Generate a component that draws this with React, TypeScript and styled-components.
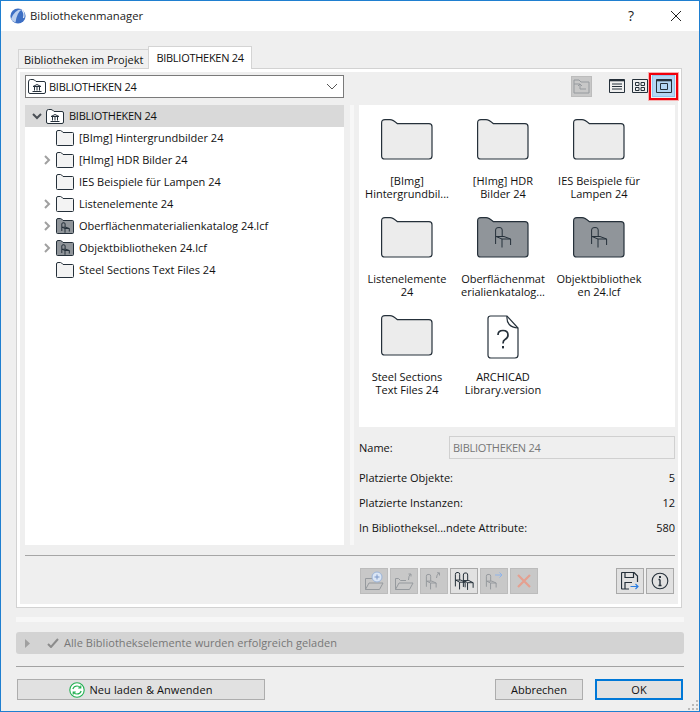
import styled, { createGlobalStyle } from "styled-components"
import { ReactNode } from "react"

const GlobalStyle = createGlobalStyle`
	html, body {
		margin: 0;
		padding: 0;
		background: #efefef;
	}
	* {
		box-sizing: border-box;
	}
`

const INK = "#25303a"
const DIM = "#969a9e"

const FOLDER_PATH =
	"M0.6 4 Q0.6 0.6 4 0.6 H9 Q12 0.6 16.5 4.7 H48 Q51 4.7 51 7.7 V37 Q51 40 48 40 H3.6 Q0.6 40 0.6 37 Z"

const Chair = ({
	x = 0,
	y = 0,
	color = INK,
	s = 1,
	sy,
}: {
	x?: number
	y?: number
	color?: string
	s?: number
	sy?: number
}) => (
	<path
		transform={`translate(${x} ${y}) scale(${s} ${sy ?? s})`}
		d="M0.6 17 V3 Q0.6 0.6 3 0.6 H5 Q7.2 0.6 7.2 3 V9.5 M1 9.5 H9 L15.6 12 H7 L1 9.5 M7 12 V20.5 M15.6 12 V18"
		fill="none"
		stroke={color}
		strokeWidth="1"
		vectorEffect="non-scaling-stroke"
	/>
)

const BigFolder = ({ dark }: { dark?: boolean }) => (
	<svg width="52" height="41" viewBox="0 0 52 41">
		<path d={FOLDER_PATH} fill={dark ? "#90959a" : "#ececec"} stroke={INK} strokeWidth="1.2" />
		{dark && <Chair x={18} y={10} />}
	</svg>
)

const SmallFolder = ({ dark }: { dark?: boolean }) => (
	<svg width="18" height="16" viewBox="0 0 18 16">
		<path
			d="M0.5 2 Q0.5 0.5 2 0.5 H4.5 Q5.5 0.5 7 2.5 H16.5 Q17.5 2.5 17.5 3.5 V14.5 Q17.5 15.5 16.5 15.5 H1.5 Q0.5 15.5 0.5 14.5 Z"
			fill={dark ? "#90959a" : "#f3f3f3"}
			stroke={INK}
		/>
		{dark && <Chair x={5.5} y={4.5} s={0.5} />}
	</svg>
)

const LibraryFolder = () => (
	<svg width="18" height="15" viewBox="0 0 18 15">
		<path
			d="M0.5 3 Q0.5 0.5 2.5 0.5 H5 Q6.5 0.5 8 2.5 H16 Q17.5 2.5 17.5 4 V13 Q17.5 14.5 16 14.5 H2 Q0.5 14.5 0.5 13 Z"
			fill="#fff"
			stroke={INK}
		/>
		<path d="M5 7.5 L9 5.5 L13 7.5 Z M4.5 12.5 H13.5 M6.5 8 V11.5 M9 8 V11.5 M11.5 8 V11.5" fill="none" stroke={INK} />
	</svg>
)

const Chevron = ({ down, dark }: { down?: boolean; dark?: boolean }) => (
	<svg width="10" height="10" viewBox="0 0 10 10">
		<path
			d={down ? "M1 3 L5 7 L9 3" : "M3 1 L7 5 L3 9"}
			fill="none"
			stroke={dark ? "#4a4f55" : "#a0a0a0"}
			strokeWidth="2"
		/>
	</svg>
)

const VersionFile = () => (
	<svg width="32" height="44" viewBox="0 0 32 44">
		<path
			d="M3.5 1 H20 L31 13 V40 Q31 43 28 43 H4 Q1 43 1 40 V3.5 Q1 1 3.5 1 Z"
			fill="#fff"
			stroke={INK}
			strokeWidth="1.2"
		/>
		<path d="M20 1 Q19 12 31 13" fill="none" stroke={INK} strokeWidth="1.2" />
		<path
			d="M11 20 Q11 15.5 16 15.5 Q21 15.5 21 20 Q21 23 18 24.5 Q16 25.5 16 28.5"
			fill="none"
			stroke={INK}
			strokeWidth="1.7"
		/>
		<rect x="15" y="31" width="2" height="2.4" fill={INK} />
	</svg>
)

const AppLogo = () => (
	<svg width="16" height="16" viewBox="0 0 16 16">
		<circle cx="8" cy="8" r="7.6" fill="#3d6fc4" />
		<path d="M1 11 Q5 1 12 1.5 Q7 4 5.5 14.5 Q2.5 14 1 11 Z" fill="#bcd0ee" />
		<path d="M12 2 Q15 5 13.5 10" fill="none" stroke="#e6eefa" strokeWidth="1.2" />
	</svg>
)

const ReloadIcon = () => (
	<svg width="16" height="16" viewBox="0 0 16 16">
		<circle cx="8" cy="8" r="7.2" fill="#fff" stroke="#20b050" strokeWidth="1.1" />
		<path
			d="M3.8 7 Q4.8 4 8 4 Q10 4 11.3 5.4 M11.8 3.4 V6 H9.2 M12.2 9 Q11.2 12 8 12 Q6 12 4.7 10.6 M4.2 12.6 V10 H6.8"
			fill="none"
			stroke="#20b050"
			strokeWidth="1.1"
		/>
	</svg>
)

const tools: { icon: ReactNode; on?: boolean }[] = [
	{
		icon: (
			<svg width="20" height="20" viewBox="0 0 20 20" fill="none" stroke={DIM}>
				<path d="M1.5 18.5 V7.5 H8 M1.5 18.5 L5 12 H19 L15.5 18.5 Z" />
				<circle cx="13" cy="6" r="5" fill="#dbe6f5" stroke="#9db5d8" />
				<path d="M13 3.5 V8.5 M10.5 6 H15.5" stroke="#7a97c8" />
			</svg>
		),
	},
	{
		icon: (
			<svg width="20" height="20" viewBox="0 0 20 20" fill="none" stroke={DIM}>
				<path d="M1.5 18.5 V7.5 H4.5 L6.5 9.5 H12 M1.5 18.5 L5 12 H19 L15.5 18.5 Z M14.5 9 Q14.5 5 16.5 3 M14.5 3 H17 V5.5" />
			</svg>
		),
	},
	{
		icon: (
			<svg width="20" height="20" viewBox="0 0 20 20">
				<Chair x={2} y={3} color={DIM} s={0.65} sy={0.75} />
				<path d="M12.5 7 Q12.5 4 15 2 M13 1.8 H15.5 V4.5" fill="none" stroke={DIM} />
			</svg>
		),
	},
	{
		on: true,
		icon: (
			<svg width="20" height="20" viewBox="0 0 20 20">
				<Chair x={1} y={1} s={0.65} sy={0.85} />
				<Chair x={9} y={1.5} s={0.65} sy={0.85} />
			</svg>
		),
	},
	{
		icon: (
			<svg width="20" height="20" viewBox="0 0 20 20">
				<Chair x={2} y={3} color={DIM} s={0.65} sy={0.75} />
				<path d="M11 4 H18 M15.5 1.5 L18 4 L15.5 6.5" fill="none" stroke="#8fb4ea" />
			</svg>
		),
	},
	{
		icon: (
			<svg width="16" height="16" viewBox="0 0 16 16">
				<path d="M2 2 L14 14 M14 2 L2 14" stroke="#e5a090" strokeWidth="2.2" />
			</svg>
		),
	},
]

const treeRows: { label: string; more?: boolean; dark?: boolean }[] = [
	{ label: "[BImg] Hintergrundbilder 24" },
	{ label: "[HImg] HDR Bilder 24", more: true },
	{ label: "IES Beispiele für Lampen 24" },
	{ label: "Listenelemente 24", more: true },
	{ label: "Oberflächenmaterialienkatalog 24.lcf", more: true, dark: true },
	{ label: "Objektbibliotheken 24.lcf", more: true, dark: true },
	{ label: "Steel Sections Text Files 24" },
]

const gridItems: { lines: string[]; kind: "folder" | "lib" | "file" }[] = [
	{ lines: ["[BImg]", "Hintergrundbil..."], kind: "folder" },
	{ lines: ["[HImg] HDR", "Bilder 24"], kind: "folder" },
	{ lines: ["IES Beispiele für", "Lampen 24"], kind: "folder" },
	{ lines: ["Listenelemente", "24"], kind: "folder" },
	{ lines: ["Oberflächenmat", "erialienkatalog..."], kind: "lib" },
	{ lines: ["Objektbibliothek", "en 24.lcf"], kind: "lib" },
	{ lines: ["Steel Sections", "Text Files 24"], kind: "folder" },
	{ lines: ["ARCHICAD", "Library.version"], kind: "file" },
]

const stats = [
	{ label: "Platzierte Objekte:", value: "5" },
	{ label: "Platzierte Instanzen:", value: "12" },
	{ label: "In Bibliotheksel...ndete Attribute:", value: "580" },
]

const App = () => {
	return (
		<Window>
			<GlobalStyle />
			<TitleBar>
				<AppLogo />
				<TitleText>Bibliothekenmanager</TitleText>
				<HelpMark>?</HelpMark>
				<svg width="12" height="12" viewBox="0 0 12 12">
					<path d="M1 1 L11 11 M11 1 L1 11" stroke="#222" strokeWidth="1" />
				</svg>
			</TitleBar>

			<Body>
				<Tabs>
					<Tab>Bibliotheken im Projekt</Tab>
					<Tab $active>
						<Caps>BIBLIOTHEKEN 24</Caps>
					</Tab>
				</Tabs>

				<Panel>
					<Columns>
						<LeftColumn>
							<Combo>
								<LibraryFolder />
								<ComboText>
									<Caps>BIBLIOTHEKEN 24</Caps>
								</ComboText>
								<svg width="12" height="7" viewBox="0 0 12 7">
									<path d="M1 1 L6 6 L11 1" fill="none" stroke="#555" />
								</svg>
							</Combo>
							<Tree>
								<TreeHead>
									<Chevron down dark />
									<LibraryFolder />
									<HeadLabel>
										<Caps>BIBLIOTHEKEN 24</Caps>
									</HeadLabel>
								</TreeHead>
								{treeRows.map((row) => (
									<TreeRow key={row.label}>
										<Arrow>{row.more && <Chevron />}</Arrow>
										<SmallFolder dark={row.dark} />
										<RowLabel>{row.label}</RowLabel>
									</TreeRow>
								))}
							</Tree>
						</LeftColumn>

						<Splitter />

						<RightColumn>
							<ViewBar>
								<UpButton>
									<svg width="17" height="15" viewBox="0 0 17 15" fill="none" stroke={DIM}>
										<path d="M1 14 V1 H6 L8 3 H16 V14 Z M1 5 H7 M5 7 L7 5 L9 7 M7 5 V10 H13" />
									</svg>
								</UpButton>
								<ViewIcon>
									<svg width="16" height="14" viewBox="0 0 16 14" fill="none" stroke={INK}>
										<path d="M0.5 0.5 H15.5 V13.5 H0.5 Z M3 5 H13 M3 7.5 H13 M3 10 H13" />
										<path d="M0.5 1.5 H15.5" strokeWidth="1.6" />
									</svg>
								</ViewIcon>
								<ViewIcon>
									<svg width="16" height="14" viewBox="0 0 16 14" fill="none" stroke={INK}>
										<path d="M0.5 0.5 H15.5 V13.5 H0.5 Z" />
										<path d="M3.5 3.5 H7 V6.5 H3.5 Z M9 3.5 H12.5 V6.5 H9 Z M3.5 8.5 H7 V11.5 H3.5 Z M9 8.5 H12.5 V11.5 H9 Z" />
									</svg>
								</ViewIcon>
								<ActiveView>
									<svg width="16" height="14" viewBox="0 0 16 14" fill="none" stroke={INK}>
										<path d="M0.5 0.5 H15.5 V13.5 H0.5 Z" />
										<path d="M0.5 1.5 H15.5" strokeWidth="1.6" />
										<path d="M4.5 4.5 H11.5 V10.5 H4.5 Z" />
									</svg>
									<Highlight />
								</ActiveView>
							</ViewBar>

							<IconArea>
								{gridItems.map((item) => (
									<IconCell key={item.lines[0]}>
										<IconBox>
											{item.kind === "file" ? <VersionFile /> : <BigFolder dark={item.kind === "lib"} />}
										</IconBox>
										<IconLabel>
											{item.lines[0]}
											<br />
											{item.lines[1]}
										</IconLabel>
									</IconCell>
								))}
							</IconArea>

							<NameRow>
								<span>Name:</span>
								<NameField>
									<Caps>BIBLIOTHEKEN 24</Caps>
								</NameField>
							</NameRow>
							{stats.map((stat) => (
								<StatRow key={stat.label}>
									<span>{stat.label}</span>
									<span>{stat.value}</span>
								</StatRow>
							))}
						</RightColumn>
					</Columns>

					<PanelRule />

					<ToolRow>
						{tools.map((tool, i) => (
							<ToolButton key={i} $on={tool.on}>
								{tool.icon}
							</ToolButton>
						))}
						<ToolSpacer />
						<ToolButton $on>
							<svg width="18" height="18" viewBox="0 0 18 18" fill="none" stroke={INK}>
								<path d="M8 17 H1.5 Q0.5 17 0.5 16 V1.5 Q0.5 0.5 1.5 0.5 H13 L16.5 4 V10" strokeWidth="1.2" />
								<path d="M4 0.5 V5.5 H12.5 V0.5 M4 17 V10.5 H11" strokeWidth="1.2" />
								<path d="M9.5 14.5 H17 M14.5 12 L17 14.5 L14.5 17" stroke="#2a7de1" strokeWidth="1.2" />
							</svg>
						</ToolButton>
						<ToolButton $on>
							<svg width="18" height="18" viewBox="0 0 18 18" fill="none" stroke={INK}>
								<circle cx="9" cy="9" r="7.8" strokeWidth="1.1" />
								<path d="M9 7.5 V13.5 M7.5 13.5 H10.5 M7.5 7.5 H9" strokeWidth="1.4" />
								<rect x="8" y="4" width="2" height="2" fill={INK} stroke="none" />
							</svg>
						</ToolButton>
					</ToolRow>
				</Panel>

				<LightBand />

				<StatusBar>
					<svg width="7" height="9" viewBox="0 0 7 9">
						<path d="M1 0 L6 4.5 L1 9 Z" fill="#a0a0a0" />
					</svg>
					<svg width="12" height="10" viewBox="0 0 12 10">
						<path d="M1 6 L4 9 L11 1" fill="none" stroke="#8c8c8c" strokeWidth="2" />
					</svg>
					<StatusText>Alle Bibliothekselemente wurden erfolgreich geladen</StatusText>
				</StatusBar>

				<BottomRule />

				<Footer>
					<WideButton>
						<ReloadIcon />
						Neu laden &amp; Anwenden
					</WideButton>
					<FooterSpacer />
					<DialogButton>Abbrechen</DialogButton>
					<DialogButton $primary>OK</DialogButton>
				</Footer>
			</Body>
			<Grip>
				<svg width="12" height="12" viewBox="0 0 12 12" fill="#b9b9b9">
					<rect x="9" y="1" width="2" height="2" />
					<rect x="5" y="5" width="2" height="2" />
					<rect x="9" y="5" width="2" height="2" />
					<rect x="1" y="9" width="2" height="2" />
					<rect x="5" y="9" width="2" height="2" />
					<rect x="9" y="9" width="2" height="2" />
				</svg>
			</Grip>
		</Window>
	)
}

export default App

const Window = styled.div`
	position: relative;
	width: 700px;
	height: 712px;
	display: flex;
	flex-direction: column;
	background: #efefef;
	border: 1px solid #1f7fd0;
	color: #111;
	font-family: "Open Sans", "Noto Sans", sans-serif;
	font-size: 11px;
	overflow: hidden;
`

const Caps = styled.span`
	letter-spacing: -0.27px;
`

const TitleBar = styled.div`
	height: 30px;
	flex: none;
	display: flex;
	align-items: center;
	padding: 0 17px 1px 9px;
	background: #fff;
`

const TitleText = styled.div`
	flex: 1;
	margin-left: 4px;
	font-size: 11.3px;
	color: #222;
`

const HelpMark = styled.div`
	margin-right: 36px;
	font-size: 14px;
	color: #222;
`

const Body = styled.div`
	flex: 1;
	display: flex;
	flex-direction: column;
	padding: 15px 15px 0 15px;
`

const Tabs = styled.div`
	display: flex;
	align-items: flex-end;
	height: 22px;
	padding-left: 2px;
	position: relative;
	z-index: 1;
`

const Tab = styled.div<{ $active?: boolean }>`
	display: flex;
	align-items: center;
	justify-content: center;
	height: ${(p) => (p.$active ? "23px" : "19px")};
	margin-bottom: ${(p) => (p.$active ? "-1px" : "0")};
	padding: 0 ${(p) => (p.$active ? "7px 1px" : "5px")};
	border: 1px solid #d4d4d4;
	border-bottom: 0;
	background: ${(p) => (p.$active ? "#fff" : "#f0f0f0")};
	${(p) => !p.$active && "border-right: 0;"}
`

const Panel = styled.div`
	width: 666px;
	height: 540px;
	flex: none;
	display: flex;
	flex-direction: column;
	padding: 3px 4px 0 4px;
	background: #efefef;
	border: 1px solid #d2d2d2;
	box-shadow: inset 0 0 0 3px #fff;
`

const Columns = styled.div`
	display: flex;
	height: 473px;
	flex: none;
	padding: 0 2px 0 4px;
`

const LeftColumn = styled.div`
	width: 319px;
	display: flex;
	flex-direction: column;
`

const Combo = styled.div`
	height: 23px;
	margin-top: 3px;
	display: flex;
	align-items: center;
	gap: 3px;
	padding: 0 5px 0 2px;
	background: #fff;
	border: 1px solid #7a7a7a;
`

const ComboText = styled.span`
	flex: 1;
`

const Tree = styled.div`
	flex: 1;
	margin-top: 7px;
	background: #fff;
`

const TreeHead = styled.div`
	height: 22px;
	display: flex;
	align-items: center;
	gap: 4px;
	padding-left: 7px;
	background: #d9d9d9;
`

const TreeRow = styled.div`
	height: 22px;
	display: flex;
	align-items: center;
	padding-left: 17px;
`

const Arrow = styled.div`
	width: 14px;
	height: 10px;
	display: flex;
`

const RowLabel = styled.span`
	margin: 0 0 2px 5px;
	white-space: nowrap;
`

const HeadLabel = styled(RowLabel)`
	margin-left: 1px;
`

const Splitter = styled.div`
	width: 10px;
	margin-top: 33px;
	background: linear-gradient(to right, #efefef 6px, #f7f7f7 6px);
`

const RightColumn = styled.div`
	width: 321px;
	display: flex;
	flex-direction: column;
	padding-left: 5px;
`

const ViewBar = styled.div`
	height: 30px;
	display: flex;
	align-items: flex-start;
	justify-content: flex-end;
	padding-top: 3px;
	flex: none;
`

const UpButton = styled.div`
	width: 21px;
	height: 21px;
	margin: 1px 17px 0 0;
	display: flex;
	align-items: center;
	justify-content: center;
	background: #c8c8c8;
	border: 1px solid #bcbcbc;
`

const ViewIcon = styled.div`
	width: 16px;
	height: 14px;
	margin: 4px 7px 0 0;
	display: flex;
`

const ActiveView = styled.div`
	position: relative;
	width: 23px;
	height: 22px;
	margin-left: -3px;
	display: flex;
	align-items: center;
	justify-content: center;
	background: #b4d6f3;
	border: 1px solid #8fc5ef;
`

const Highlight = styled.div`
	position: absolute;
	inset: -3px -4px -4px -4px;
	border: 2px solid #f0000c;
	box-shadow: 0 0 0 1px #f7b0b0;
`

const IconArea = styled.div`
	height: 322px;
	flex: none;
	margin-top: 3px;
	padding-top: 14px;
	display: grid;
	grid-template-columns: repeat(3, 96px);
	grid-auto-rows: 98px;
	background: #fff;
`

const IconCell = styled.div`
	display: flex;
	flex-direction: column;
	align-items: center;
`

const IconBox = styled.div`
	height: 44px;
	display: flex;
	align-items: flex-start;
`

const IconLabel = styled.div`
	margin-top: 11px;
	line-height: 13px;
	text-align: center;
	white-space: nowrap;
`

const NameRow = styled.div`
	height: 23px;
	margin: 9px 0 6px;
	display: flex;
	align-items: center;
	flex: none;

	span:first-child {
		width: 90px;
	}
`

const NameField = styled.div`
	flex: 1;
	height: 23px;
	display: flex;
	align-items: center;
	padding-left: 3px;
	border: 1px solid #d0d0d0;
	color: #777;
`

const StatRow = styled.div`
	height: 25px;
	display: flex;
	align-items: center;
	justify-content: space-between;
	flex: none;
`

const PanelRule = styled.div`
	height: 1px;
	margin: 10px 2px 0 4px;
	background: #a6a6a6;
	flex: none;
`

const ToolRow = styled.div`
	display: flex;
	gap: 2px;
	padding: 12px 3px 0 339px;
`

const ToolButton = styled.div<{ $on?: boolean }>`
	width: 28px;
	height: 26px;
	display: flex;
	align-items: center;
	justify-content: center;
	background: ${(p) => (p.$on ? "#e1e1e1" : "#c8c8c8")};
	border: 1px solid ${(p) => (p.$on ? "#a9a9a9" : "#bcbcbc")};
`

const ToolSpacer = styled.div`
	flex: 1;
`

const LightBand = styled.div`
	height: 5px;
	margin-top: 9px;
	width: 668px;
	background: #f7f7f7;
	flex: none;
`

const StatusBar = styled.div`
	width: 668px;
	height: 22px;
	margin-top: 10px;
	display: flex;
	align-items: center;
	flex: none;
	padding-left: 8px;
	gap: 16px;
	background: #d3d3d3;
	border-radius: 3px;
	color: #777;

	svg + svg {
		margin-right: -11px;
	}
`

const StatusText = styled.span`
	margin-bottom: 2px;
	letter-spacing: 0.05px;
`

const BottomRule = styled.div`
	width: 668px;
	height: 1px;
	margin-top: 12px;
	background: #a3a3a3;
	flex: none;
`

const Footer = styled.div`
	display: flex;
	margin-top: 12px;
	padding: 0 1px;
	width: 668px;
`

const FooterSpacer = styled.div`
	flex: 1;
`

const WideButton = styled.div`
	width: 248px;
	height: 21px;
	display: flex;
	align-items: center;
	justify-content: center;
	gap: 4px;
	letter-spacing: 0.1px;
	background: #e1e1e1;
	border: 1px solid #adadad;
`

const DialogButton = styled.div<{ $primary?: boolean }>`
	width: 88px;
	height: 21px;
	margin-left: ${(p) => (p.$primary ? "12px" : "0")};
	display: flex;
	align-items: center;
	justify-content: center;
	background: #e1e1e1;
	border: ${(p) => (p.$primary ? "2px solid #0078d7" : "1px solid #adadad")};
`

const Grip = styled.div`
	position: absolute;
	right: 0;
	bottom: 0;
	width: 12px;
	height: 12px;
	display: flex;
`
